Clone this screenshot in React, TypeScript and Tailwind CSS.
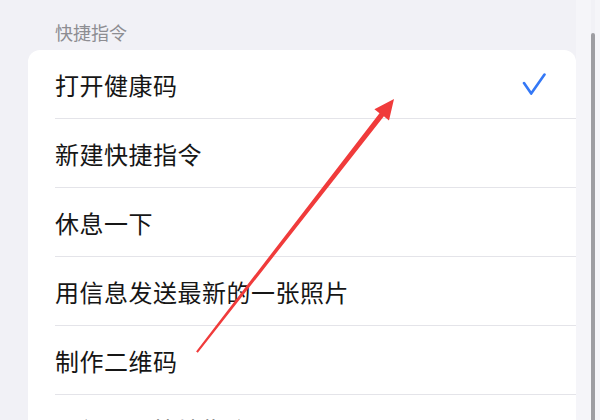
const rows = [
	{ label: '打开健康码', checked: true },
	{ label: '新建快捷指令' },
	{ label: '休息一下' },
	{ label: '用信息发送最新的一张照片' },
	{ label: '制作二维码' },
	{ label: '运行一个快捷指令' },
];

const CheckIcon = () => (
	<svg width="24" height="24" viewBox="0 0 24 24" fill="none">
		<path
			d="M2 10l7.2 10.6L22.5 1.5"
			stroke="#3478f6"
			strokeWidth="2.6"
			strokeLinecap="round"
			strokeLinejoin="round"
		/>
	</svg>
);

const Arrow = () => (
	<svg
		className="absolute left-0 top-0 pointer-events-none"
		width="600"
		height="420"
		viewBox="0 0 600 420"
	>
		<polygon
			points="197.8,352.8 383.9,116.3 389,120.5 394,99 374.4,109.3 379.5,113.2 196.1,351.4"
			fill="#f03b3b"
		/>
	</svg>
);

const App = () => {
	return (
		<div
			className="relative w-[600px] h-[420px] overflow-hidden bg-[#f1f1f6] flex"
			style={{ fontFamily: '"Noto Sans CJK SC", "Noto Sans", sans-serif' }}
		>
			<div className="w-[576px] pl-[28px] flex flex-col">
				<div className="pl-[27px] pt-[22px] text-[18px] leading-[20px] text-[#8d8d92]">
					快捷指令
				</div>
				<div className="mt-[8px] bg-white rounded-[12px] flex flex-col">
					{rows.map((row, i) => (
						<div key={i} className="h-[69px] flex pl-[27px] shrink-0">
							<div className="flex-1 flex items-center justify-between pr-[30px] pt-[1px] border-b border-[#e4e4e9]">
								<span className="text-[24px] leading-[30px] tracking-[0.5px] text-[#161616]">
									{row.label}
								</span>
								{row.checked && <CheckIcon />}
							</div>
						</div>
					))}
				</div>
			</div>
			<div className="w-[15px] bg-[#f5f5f9]" />
			<div className="w-[4px] mt-[33px] bg-[#9d9da2] rounded-t-[2px]" />
			<div className="flex-1 bg-[#f5f5f9]" />
			<Arrow />
		</div>
	);
};

export default App;
